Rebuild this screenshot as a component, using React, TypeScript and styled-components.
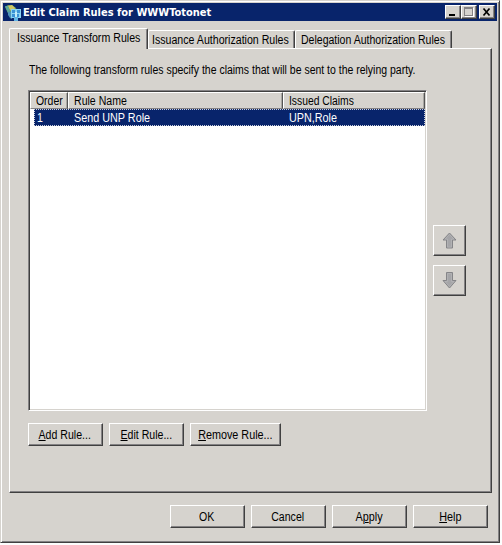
import React from "react";
import styled, { createGlobalStyle, css } from "styled-components";

const face = "#d6d3ce";

const GlobalStyle = createGlobalStyle`
  * { box-sizing: border-box; }
  body {
    margin: 0;
    background: #fdfdfd;
    color: #000;
    font: 12px/14px "Liberation Sans", Arial, sans-serif;
    overflow: hidden;
  }
`;

const raised = css`
  border: 1px solid;
  border-color: #fff #404040 #404040 #fff;
  box-shadow: inset -1px -1px 0 #848284;
`;

const Dialog = styled.main`
  width: 500px;
  height: 543px;
  padding: 2px;
  background: ${face};
  border: 1px solid;
  border-color: #d6d3ce #404040 #404040 #d6d3ce;
  box-shadow: inset 1px 1px 0 #fff, inset -1px -1px 0 #848284;
  display: flex;
  flex-direction: column;
`;

const TitleBar = styled.header`
  height: 18px;
  flex: none;
  padding: 0 2px 0 1px;
  background: #08246b;
  display: flex;
  align-items: center;
`;

const Title = styled.h1`
  flex: 1;
  margin: 0 0 0 1px;
  color: #fff;
  font: bold 11px/18px "DejaVu Sans Condensed", "DejaVu Sans", sans-serif;
  font-stretch: condensed;
  padding-top: 1px;
  white-space: nowrap;
`;

const WindowButtons = styled.div`
  display: flex;
`;

const WindowButton = styled.button<{ $gap?: boolean }>`
  ${raised}
  width: 16px;
  height: 14px;
  padding: 0;
  margin-left: ${(p) => (p.$gap ? 2 : 0)}px;
  background: ${face};
  display: flex;
  svg { display: block; }
`;

const Body = styled.div`
  flex: 1;
  display: flex;
  flex-direction: column;
  padding: 7px 6px 0;
`;

const Tabs = styled.nav`
  height: 20px;
  display: flex;
  align-items: flex-end;
`;

const Tab = styled.div<{ $w: number; $active?: boolean; $pad?: number }>`
  width: ${(p) => p.$w}px;
  height: ${(p) => (p.$active ? 21 : 18)}px;
  margin-bottom: ${(p) => (p.$active ? -1 : 0)}px;
  padding: 2px 0 0 ${(p) => p.$pad ?? 3}px;
  background: ${face};
  border: 1px solid;
  border-color: #fff #404040 transparent #fff;
  border-bottom: 0;
  border-radius: 2px 2px 0 0;
  box-shadow: inset -1px 0 0 #848284;
  white-space: nowrap;
  z-index: ${(p) => (p.$active ? 1 : 0)};
`;

const Page = styled.section`
  ${raised}
  width: 483px;
  height: 445px;
  padding: 14px 0 0 18px;
`;

/* Narrow interface lettering: the face is condensed horizontally. */
const Text = styled.span<{ $fit?: number; $center?: boolean }>`
  display: inline-block;
  transform: scaleX(${(p) => p.$fit ?? 0.88});
  transform-origin: ${(p) => (p.$center ? "center" : "left")};
  white-space: nowrap;
`;

const Intro = styled.p`
  margin: 0 0 13px 1px;
`;

const ListArea = styled.div`
  display: flex;
  gap: 6px;
`;

const List = styled.div`
  width: 399px;
  height: 321px;
  background: #fff;
  border: 1px solid;
  border-color: #848284 #fff #fff #848284;
  padding: 1px;
  box-shadow: inset 1px 1px 0 #404040, inset -1px -1px 0 ${face};
`;

const Columns = styled.div`
  display: grid;
  grid-template-columns: 38px 215px 1fr;
`;

const HeadCell = styled.div`
  ${raised}
  border-right-color: #555;
  border-bottom-color: #848284;
  box-shadow: inset -1px 0 0 #a9a7a3;
  height: 17px;
  padding: 1px 0 0 5px;
  background: ${face};
`;

const Row = styled.div`
  display: grid;
  grid-template-columns: 34px 215px 1fr;
  height: 17px;
  margin-left: 4px;
  background: #08246b;
  color: #fff;
  border: 1px dotted #c8cede;
`;

const Cell = styled.div`
  padding: 1px 0 0 2px;
  &:not(:first-child) { padding-left: 5px; }
`;

const ArrowColumn = styled.div`
  display: flex;
  flex-direction: column;
  gap: 9px;
  padding-top: 135px;
`;

const ArrowButton = styled.button`
  ${raised}
  width: 33px;
  height: 31px;
  padding: 0;
  background: ${face};
  display: flex;
  align-items: center;
  justify-content: center;
`;

const Buttons = styled.div<{ $footer?: boolean }>`
  display: flex;
  gap: 6px;
  padding-top: 12px;
  justify-content: ${(p) => (p.$footer ? "flex-end" : "flex-start")};
  padding-right: ${(p) => (p.$footer ? 3 : 0)}px;
`;

const Push = styled.button<{ $w?: number }>`
  ${raised}
  width: ${(p) => p.$w ?? 75}px;
  height: 23px;
  padding: 0 1px 0 0;
  background: ${face};
  color: #000;
  font: inherit;
`;

const AppIcon = () => (
  <svg width="18" height="17" viewBox="0 0 18 17">
    <path d="M1 3 4 1l4 0 4 3 1 4-4 4-5-3Z" fill="#6f9c58" />
    <path d="M4 2 8 1l3 3-2 4-3-2Z" fill="#cfc766" />
    <path d="m1 2 3 0 2 5-2 2Z" fill="#5aa79b" />
    <path d="M4 8l4-1v8l-2-1-2-3Z" fill="#4f93b8" />
    <path d="M7 5h10v9H7z" fill="#8ad4f2" />
    <path d="M8 6h3v3H8zM13 6h3v3h-3zM8 10h3v3H8zM13 10h2v3h-2z" fill="#3a92d6" />
    <path d="M10 13h4v4h-4z" fill="#5fb4e4" />
    <path d="M11 8h2v5h-2z" fill="#c3ecfa" />
  </svg>
);

const Arrow = ({ down }: { down?: boolean }) => (
  <svg width="15" height="17" viewBox="0 0 15 17">
    <path
      d={down ? "M4.5 .5h6v8h3.5l-6.5 7.5-6.5-7.5h3.5Z" : "M7.5 1l6.5 7h-3.5v8h-6v-8h-3.5Z"}
      fill="#a5a5a8"
      stroke="#858588"
    />
    <path
      d={down ? "M5.5 1.5h4v8h2.5l-4.5 5-4.5-5h2.5Z" : "M7.5 2.5l4.5 4.6h-2.5v8h-4v-8h-2.5Z"}
      fill="none"
      stroke="#b6b6b8"
      strokeWidth=".7"
    />
  </svg>
);

export default function App() {
  return (
    <>
      <GlobalStyle />
      <Dialog>
        <TitleBar>
          <AppIcon />
          <Title>Edit Claim Rules for WWWTotonet</Title>
          <WindowButtons>
            <WindowButton aria-label="Minimize">
              <svg width="14" height="12"><path d="M3 8h6v2H3z" /></svg>
            </WindowButton>
            <WindowButton aria-label="Maximize">
              <svg width="14" height="12" shapeRendering="crispEdges">
                <path d="M3 2h9v9H3z" fill="#fff" />
                <path d="M2 1h9v9H2z" fill="#848284" />
                <path d="M3 3h7v6H3z" fill={face} />
              </svg>
            </WindowButton>
            <WindowButton aria-label="Close" $gap>
              <svg width="14" height="12"><path d="m3.5 2.5 6 7m0-7-6 7" stroke="#000" strokeWidth="1.7" /></svg>
            </WindowButton>
          </WindowButtons>
        </TitleBar>
        <Body>
          <Tabs>
            <Tab $w={139} $pad={7} $active><Text $fit={0.885}>Issuance Transform Rules</Text></Tab>
            <Tab $w={147}><Text $fit={0.884}>Issuance Authorization Rules</Text></Tab>
            <Tab $w={157} $pad={5}><Text $fit={0.877}>Delegation Authorization Rules</Text></Tab>
          </Tabs>
          <Page>
            <Intro>
              <Text $fit={0.873}>The following transform rules specify the claims that will be sent to the relying party.</Text>
            </Intro>
            <ListArea>
              <List>
                <Columns>
                  <HeadCell><Text $fit={0.87}>Order</Text></HeadCell>
                  <HeadCell><Text>Rule Name</Text></HeadCell>
                  <HeadCell><Text $fit={0.86}>Issued Claims</Text></HeadCell>
                </Columns>
                <Row>
                  <Cell><Text>1</Text></Cell>
                  <Cell><Text $fit={0.9}>Send UNP Role</Text></Cell>
                  <Cell><Text $fit={0.9}>UPN,Role</Text></Cell>
                </Row>
              </List>
              <ArrowColumn>
                <ArrowButton aria-label="Move up"><Arrow /></ArrowButton>
                <ArrowButton aria-label="Move down"><Arrow down /></ArrowButton>
              </ArrowColumn>
            </ListArea>
            <Buttons>
              <Push><Text $center><u>A</u>dd Rule...</Text></Push>
              <Push><Text $center><u>E</u>dit Rule...</Text></Push>
              <Push $w={91}><Text $center $fit={0.9}><u>R</u>emove Rule...</Text></Push>
            </Buttons>
          </Page>
          <Buttons $footer>
            <Push><Text $center>OK</Text></Push>
            <Push><Text $center>Cancel</Text></Push>
            <Push><Text $center $fit={0.9}>A<u>p</u>ply</Text></Push>
            <Push><Text $center $fit={0.9}><u>H</u>elp</Text></Push>
          </Buttons>
        </Body>
      </Dialog>
    </>
  );
}
